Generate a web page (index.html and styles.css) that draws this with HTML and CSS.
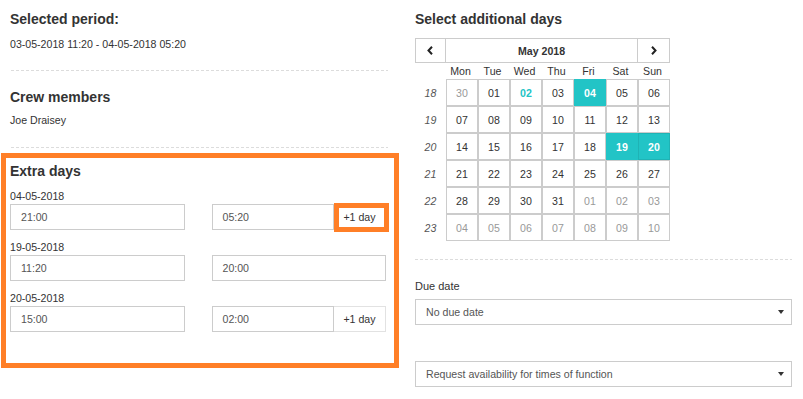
FILE: index.html
```html
<!DOCTYPE html>
<html lang="en">
<head>
<meta charset="utf-8">
<title>Extra days</title>
<link rel="stylesheet" href="styles.css">
</head>
<body>
<div class="page">
  <div class="col col-left">
    <section class="block block-period">
      <h2 class="title">Selected period:</h2>
      <p class="text">03-05-2018 11:20 - 04-05-2018 05:20</p>
    </section>
    <div class="divider"></div>
    <section class="block block-crew">
      <h2 class="title">Crew members</h2>
      <p class="text">Joe Draisey</p>
    </section>
    <div class="divider"></div>
    <section class="extra">
      <h2 class="title">Extra days</h2>
      <div class="day">
        <div class="day-label">04-05-2018</div>
        <div class="day-row">
          <div class="field">21:00</div>
          <div class="group">
            <div class="field">05:20</div>
            <span class="addon addon-marked">+1 day</span>
          </div>
        </div>
      </div>
      <div class="day">
        <div class="day-label">19-05-2018</div>
        <div class="day-row">
          <div class="field">11:20</div>
          <div class="group">
            <div class="field">20:00</div>
          </div>
        </div>
      </div>
      <div class="day">
        <div class="day-label">20-05-2018</div>
        <div class="day-row">
          <div class="field">15:00</div>
          <div class="group">
            <div class="field">02:00</div>
            <span class="addon">+1 day</span>
          </div>
        </div>
      </div>
    </section>
  </div>

  <div class="col col-right">
    <h2 class="title">Select additional days</h2>
    <div class="calendar">
      <div class="cal-head">
        <div class="cal-nav cal-prev">
          <svg width="6" height="9" viewBox="0 0 6 9"><polyline points="5,0.8 1.5,4.5 5,8.2" fill="none" stroke="#222" stroke-width="2"/></svg>
        </div>
        <div class="cal-title">May 2018</div>
        <div class="cal-nav cal-next">
          <svg width="6" height="9" viewBox="0 0 6 9"><polyline points="1,0.8 4.5,4.5 1,8.2" fill="none" stroke="#222" stroke-width="2"/></svg>
        </div>
      </div>
      <div class="cal-grid">
        <div></div>
        <div class="dow">Mon</div><div class="dow">Tue</div><div class="dow">Wed</div><div class="dow">Thu</div><div class="dow">Fri</div><div class="dow">Sat</div><div class="dow">Sun</div>

        <div class="wk">18</div>
        <div class="d old">30</div><div class="d">01</div><div class="d today">02</div><div class="d">03</div><div class="d sel">04</div><div class="d">05</div><div class="d">06</div>

        <div class="wk">19</div>
        <div class="d">07</div><div class="d">08</div><div class="d">09</div><div class="d">10</div><div class="d">11</div><div class="d">12</div><div class="d">13</div>

        <div class="wk">20</div>
        <div class="d">14</div><div class="d">15</div><div class="d">16</div><div class="d">17</div><div class="d">18</div><div class="d sel">19</div><div class="d sel sel-end">20</div>

        <div class="wk">21</div>
        <div class="d">21</div><div class="d">22</div><div class="d">23</div><div class="d">24</div><div class="d">25</div><div class="d">26</div><div class="d">27</div>

        <div class="wk">22</div>
        <div class="d">28</div><div class="d">29</div><div class="d">30</div><div class="d">31</div><div class="d old">01</div><div class="d old">02</div><div class="d old">03</div>

        <div class="wk">23</div>
        <div class="d old">04</div><div class="d old">05</div><div class="d old">06</div><div class="d old">07</div><div class="d old">08</div><div class="d old">09</div><div class="d old">10</div>
      </div>
    </div>
    <div class="divider divider-right"></div>
    <div class="field-label">Due date</div>
    <div class="select">No due date<span class="caret"></span></div>
    <div class="select select-second">Request availability for times of function<span class="caret"></span></div>
  </div>
</div>
</body>
</html>
```

FILE: styles.css
```css
* { box-sizing: border-box; }

body {
  margin: 0;
  background: #fff;
  color: #333;
  font-family: "Liberation Sans", Arial, sans-serif;
}

.page {
  display: flex;
  gap: 27px;
  padding: 11px 0 0 10px;
}

.col-left { width: 378px; flex: none; }
.col-right { width: 377px; flex: none; }

.title {
  margin: 0;
  font-size: 14px;
  line-height: 17px;
  font-weight: bold;
  color: #333;
}

.text {
  margin: 0;
  font-size: 10.6px;
  line-height: 16px;
  color: #333;
}

.block-period { padding-bottom: 18px; }
.block-period .title { margin-bottom: 8px; }

.block-crew { padding: 18px 0 19px; }
.block-crew .title { margin-bottom: 6px; }

.divider {
  height: 1px;
  margin-left: 1px;
  background: repeating-linear-gradient(to right, #dcdcdc 0 3px, transparent 3px 5px);
}

.extra {
  margin: 5px -11px 0 -9px;
  border: 5px solid #ff7f27;
  padding: 5px 8px 31px 4px;
}

.extra .title { margin-bottom: 8px; }

.day + .day { margin-top: 9px; }

.day-label {
  font-size: 10.6px;
  line-height: 16px;
  color: #333;
}

.day-row {
  display: grid;
  grid-template-columns: 1fr 1fr;
  gap: 27px;
}

.group { display: flex; }
.group .field { flex: 1; }

.field {
  height: 26px;
  border: 1px solid #ccc;
  padding: 0 10px;
  display: flex;
  align-items: center;
  font-size: 10.6px;
  color: #555;
}

.addon {
  position: relative;
  width: 52px;
  flex: none;
  height: 26px;
  border: 1px solid #e2e2e2;
  border-left: 0;
  display: flex;
  align-items: center;
  justify-content: center;
  font-size: 10.6px;
  color: #333;
}

.addon-marked::after {
  content: "";
  position: absolute;
  left: 0;
  top: -2px;
  right: -4px;
  bottom: -3px;
  border: 5px solid #ff7f27;
}

/* calendar */
.calendar {
  width: 255px;
  margin-top: 10px;
}

.cal-head {
  display: flex;
  height: 25px;
  border: 1px solid #ccc;
}

.cal-nav {
  display: flex;
  align-items: center;
  justify-content: center;
}

.cal-prev { width: 30px; border-right: 1px solid #ccc; padding-right: 2px; }
.cal-next { width: 32px; border-left: 1px solid #ccc; }

.cal-title {
  flex: 1;
  display: flex;
  align-items: center;
  justify-content: center;
  font-size: 10.6px;
  font-weight: bold;
  color: #333;
}

.cal-grid {
  display: grid;
  grid-template-columns: 31px repeat(7, 32px);
  grid-template-rows: 16px repeat(6, 27px);
}

.dow {
  display: flex;
  align-items: center;
  justify-content: center;
  padding-right: 3px;
  font-size: 10.6px;
  color: #333;
}

.wk {
  display: flex;
  align-items: center;
  justify-content: center;
  font-size: 10.6px;
  font-style: italic;
  color: #555;
}

.d {
  border: 1px solid #ccc;
  display: flex;
  align-items: center;
  justify-content: center;
  font-size: 10.6px;
  color: #333;
}

.d.old { color: #999; }
.d.today { color: #22c4c6; font-weight: bold; }
.d.sel { background: #22c4c6; border-color: #22c4c6; color: #fff; font-weight: bold; }
.d.sel-end { border-color: #1fb3b5; }

.divider-right {
  margin: 18px 0 0;
}

.field-label {
  margin-top: 18px;
  font-size: 11px;
  line-height: 16px;
  color: #333;
}

.select {
  margin-top: 5px;
  height: 26px;
  border: 1px solid #ccc;
  display: flex;
  align-items: center;
  justify-content: space-between;
  padding: 0 7px 0 10px;
  font-size: 10.6px;
  color: #555;
}

.select-second { margin-top: 36px; }

.caret {
  width: 0;
  height: 0;
  border-left: 3px solid transparent;
  border-right: 3px solid transparent;
  border-top: 4px solid #333;
}
```
